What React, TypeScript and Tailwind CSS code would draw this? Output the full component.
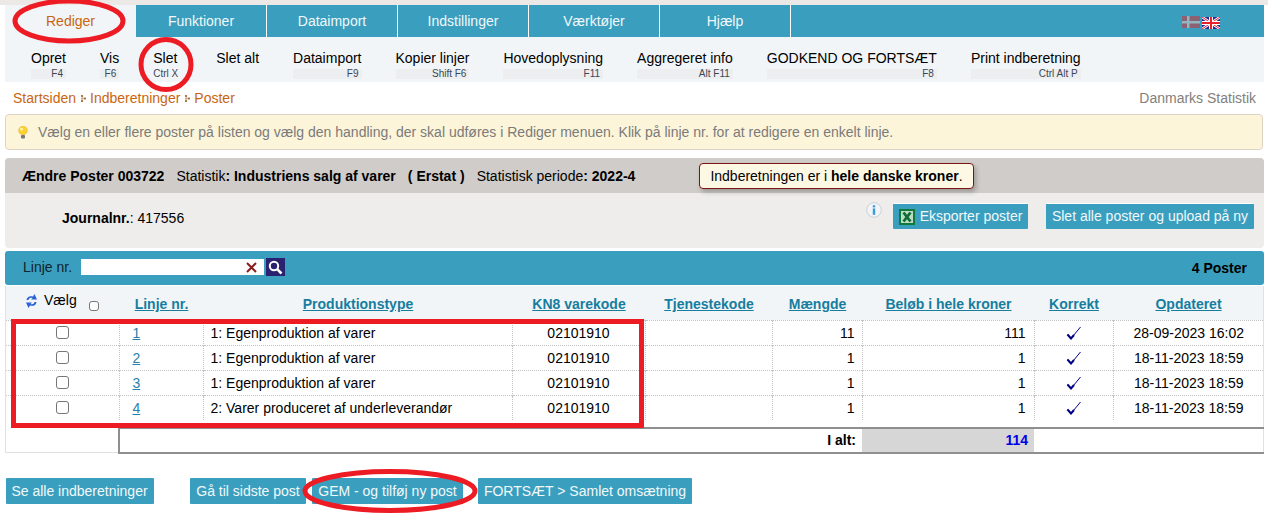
const TABS = ['Funktioner', 'Dataimport', 'Indstillinger', 'Værktøjer', 'Hjælp']

const TOOLS = [
  { label: 'Opret', hint: 'F4' },
  { label: 'Vis', hint: 'F6' },
  { label: 'Slet', hint: 'Ctrl X', plain: true },
  { label: 'Slet alt', hint: '', plain: true, extra: true },
  { label: 'Dataimport', hint: 'F9' },
  { label: 'Kopier linjer', hint: 'Shift F6' },
  { label: 'Hovedoplysning', hint: 'F11' },
  { label: 'Aggregeret info', hint: 'Alt F11' },
  { label: 'GODKEND OG FORTSÆT', hint: 'F8' },
  { label: 'Print indberetning', hint: 'Ctrl Alt P' },
]

const HEADERS = ['Linje nr.', 'Produktionstype', 'KN8 varekode', 'Tjenestekode', 'Mængde', 'Beløb i hele kroner', 'Korrekt', 'Opdateret']

const ROWS = [
  { nr: '1', type: '1: Egenproduktion af varer', amount: '11', value: '111', date: '28-09-2023 16:02' },
  { nr: '2', type: '1: Egenproduktion af varer', amount: '1', value: '1', date: '18-11-2023 18:59' },
  { nr: '3', type: '1: Egenproduktion af varer', amount: '1', value: '1', date: '18-11-2023 18:59' },
  { nr: '4', type: '2: Varer produceret af underleverandør', amount: '1', value: '1', date: '18-11-2023 18:59' },
]

function Check() {
  return (
    <svg width="16" height="14" viewBox="0 0 16 14" className="mx-auto block">
      <path d="M1.5 8.5 L5 12.5 L14.5 1" fill="none" stroke="#000080" strokeWidth="1" />
      <path d="M1.5 8.5 L5 12.5 L8 9" fill="none" stroke="#000080" strokeWidth="2" />
    </svg>
  )
}

function Box({ small }: { small?: boolean }) {
  return <span className={`block rounded-[3px] border border-[#767676] bg-white ${small ? 'w-[10px] h-[10px]' : 'w-[13px] h-[13px]'}`} />
}

function Crumb() {
  return (
    <svg width="5" height="7" viewBox="0 0 5 7" className="ml-[5px] mr-[4px]">
      <rect x="0" y="0" width="2" height="2" fill="#a9794a" />
      <rect x="0" y="5" width="2" height="2" fill="#a9794a" />
      <rect x="2.5" y="2.5" width="2.5" height="2" fill="#a9794a" />
      <rect x="0" y="2.5" width="2" height="2" fill="#c9a47e" />
    </svg>
  )
}

function Button({ children, className = '' }: { children: React.ReactNode; className?: string }) {
  return (
    <div className={`h-[26px] flex items-center justify-center bg-[#3a9fbf] text-[#f1f8fa] text-[14px] rounded-[1px] ${className}`}>
      {children}
    </div>
  )
}

export default function App() {
  return (
    <div className="relative w-[1268px] h-[515px] overflow-hidden bg-white text-[14px] text-black font-['Liberation_Sans',Arial,sans-serif]">
      <div className="h-[5px] bg-[#ece8e5]" />

      {/* Menu tabs */}
      <div className="ml-[5px] mr-[4px] h-[32px] flex bg-[#3a9fbf]">
        <div className="w-[131px] flex items-center justify-center bg-[#f1f5f7] text-[#c8660f]">Rediger</div>
        {TABS.map(t => (
          <div key={t} className="w-[131px] flex items-center justify-center border-r border-white text-[#f1f8fa]">{t}</div>
        ))}
        <div className="ml-auto mr-[44px] pt-[11px] flex items-start gap-[2px]">
          <svg width="18" height="12" viewBox="0 0 18 12">
            <rect width="18" height="12" fill="#8c6172" />
            <rect x="5" width="2.5" height="12" fill="#93b5bf" />
            <rect y="5" width="18" height="2.5" fill="#93b5bf" />
          </svg>
          <svg width="18" height="12" viewBox="0 0 18 12" className="mt-[1px]">
            <rect width="18" height="12" fill="#2a2a90" />
            <path d="M0 0 L18 12 M18 0 L0 12" stroke="#fff" strokeWidth="2.6" />
            <path d="M0 0 L18 12 M18 0 L0 12" stroke="#e8202c" strokeWidth="1" />
            <rect x="7" width="4" height="12" fill="#fff" />
            <rect y="4" width="18" height="4" fill="#fff" />
            <rect x="8" width="2" height="12" fill="#e8202c" />
            <rect y="5" width="18" height="2" fill="#e8202c" />
          </svg>
        </div>
      </div>

      {/* Toolbar */}
      <div className="ml-[5px] mr-[4px] h-[45px] pl-[26px] pt-[13px] flex gap-[34px] bg-[#f1f5f7]">
        {TOOLS.map(t => (
          <div key={t.label} className={t.extra ? 'ml-[4px]' : ''}>
            <div className="leading-[16px] whitespace-nowrap">{t.label}</div>
            <div className={`mt-[3px] h-[10px] flex items-center justify-end text-[10px] leading-[10px] whitespace-nowrap text-[#3c4654] ${t.plain ? '' : 'pr-[3px] bg-[#eceef0]'}`}>
              {t.hint}
            </div>
          </div>
        ))}
      </div>

      {/* Breadcrumb */}
      <div className="mt-[8px] pl-[13px] pr-[12px] h-[16px] flex items-center leading-[16px] text-[#c8660f]">
        <span>Startsiden</span>
        <Crumb />
        <span>Indberetninger</span>
        <Crumb />
        <span>Poster</span>
        <span className="ml-auto text-[#83807c]">Danmarks Statistik</span>
      </div>

      {/* Notice */}
      <div className="mt-[8px] ml-[5px] mr-[5px] h-[36px] pl-[12px] flex items-center gap-[10px] rounded-[4px] border border-[#dfd3c3] bg-[#fdf5d9] text-[#7b7b7b]">
        <svg width="10" height="13" viewBox="0 0 10 13">
          <circle cx="5" cy="4.5" r="4.3" fill="#fbd22e" stroke="#e2b93a" strokeWidth="0.7" />
          <circle cx="3.6" cy="3.2" r="1.4" fill="#fff3b0" />
          <rect x="3" y="9" width="4" height="3.6" rx="1" fill="#77787a" />
        </svg>
        <span>Vælg en eller flere poster på listen og vælg den handling, der skal udføres i Rediger menuen. Klik på linje nr. for at redigere en enkelt linje.</span>
      </div>

      {/* Heading panel */}
      <div className="mt-[8px] ml-[5px] mr-[4px] h-[90px] rounded-[4px] overflow-hidden bg-[#eeedeb]">
        <div className="h-[35px] pl-[17px] pt-[1px] flex items-center bg-[#d0ccc9] whitespace-pre">
          <b>Ændre Poster 003722</b>
          <span className="ml-[12px]">Statistik</span><b>: Industriens salg af varer</b>
          <b className="ml-[12px]">( Erstat )</b>
          <span className="ml-[12px]">Statistisk periode</span><b>: 2022-4</b>
          <div className="ml-[64px] h-[26px] px-[10px] flex items-center rounded-[4px] border border-[#7a1512] bg-[#fdf8e3] shadow-[2px_3px_5px_rgba(0,0,0,0.25)]">
            <span>Indberetningen er i </span><b>hele danske kroner</b><span>.</span>
          </div>
        </div>
        <div className="h-[55px] pl-[57px] flex items-start">
          <div className="pt-[17px] leading-[16px]"><b>Journalnr.</b>: 417556</div>
          <div className="ml-auto mr-[10px] pt-[10px] flex items-start">
            <svg width="16" height="16" viewBox="0 0 16 16" className="mr-[11px] mt-[-1px]">
              <circle cx="8" cy="8" r="7.3" fill="#f2f4f5" stroke="#c6d2d8" strokeWidth="1" />
              <rect x="6.8" y="3.2" width="2.4" height="2.2" fill="#3d9cdc" />
              <rect x="6.8" y="6.4" width="2.4" height="6.4" fill="#3d9cdc" />
            </svg>
            <Button className="w-[135px] gap-[5px] border-t border-[#fff]">
              <svg width="16" height="16" viewBox="0 0 16 16">
                <rect width="16" height="16" fill="#0f7a3c" />
                <rect x="2" y="2" width="12" height="12" fill="#b9dcc2" />
                <path d="M4.5 3.5 L11.5 12.5 M11.5 3.5 L4.5 12.5" stroke="#0f6a34" strokeWidth="2.8" />
              </svg>
              <span>Eksporter poster</span>
            </Button>
            <Button className="ml-[18px] w-[208px] border-t border-[#fff]">Slet alle poster og upload på ny</Button>
          </div>
        </div>
      </div>

      {/* Search bar */}
      <div className="mt-[3px] ml-[5px] mr-[4px] h-[34px] pl-[18px] pr-[17px] flex items-center rounded-[3px] bg-[#3a9fbf]">
        <div className="pb-[2px] flex items-center">
          <span className="text-[#10222a]">Linje nr.</span>
          <div className="ml-[9px] w-[183px] h-[16px] pr-[7px] flex items-center justify-end bg-white">
            <svg width="11" height="11" viewBox="0 0 11 11">
              <path d="M1 1 L10 10 M10 1 L1 10" stroke="#8c1c1c" strokeWidth="2" />
            </svg>
          </div>
          <div className="ml-[2px] w-[19px] h-[18px] flex items-center justify-center bg-[#2a2270]">
            <svg width="15" height="15" viewBox="0 0 15 15">
              <circle cx="6" cy="6" r="4.2" fill="none" stroke="#fff" strokeWidth="2" />
              <path d="M9.2 9.2 L13.5 13.5" stroke="#fff" strokeWidth="2.6" />
            </svg>
          </div>
        </div>
        <b className="ml-auto">4 Poster</b>
      </div>

      {/* Table */}
      <div className="mt-[1px] ml-[5px] mr-[4px] h-[167px] border-x border-b border-[#dfe1e2]">
        <table className="w-full table-fixed border-collapse">
          <colgroup>
            <col className="w-[113px]" />
            <col className="w-[84px]" />
            <col className="w-[309px]" />
            <col className="w-[133px]" />
            <col className="w-[127px]" />
            <col className="w-[90px]" />
            <col className="w-[172px]" />
            <col className="w-[79px]" />
            <col />
          </colgroup>
          <thead>
            <tr className="h-[34px] bg-[#f1f5f7]">
              <th className="p-0 font-normal">
                <div className="pl-[19px] pb-[3px] flex items-start gap-[6px]">
                  <svg width="13" height="16" viewBox="0 0 13 16" className="mt-[1px]">
                    <path d="M1.5 7 C2 3.5 5 2.5 8 3.5 L9.5 1 L12 6.5 L6 6.5 L7.5 5 C5.5 4.5 4 5 3.5 7 Z" fill="#2b63d4" />
                    <path d="M11.5 9 C11 12.5 8 13.5 5 12.5 L3.5 15 L1 9.5 L7 9.5 L5.5 11 C7.5 11.5 9 11 9.5 9 Z" fill="#2b63d4" />
                  </svg>
                  <span className="leading-[16px]">Vælg</span>
                  <span className="ml-[6px] mt-[9px]"><Box small /></span>
                </div>
              </th>
              {HEADERS.map(h => (
                <th key={h} className="p-0 pt-[4px] pl-[1px] font-bold text-center">
                  <span className="underline text-[#167d9f]">{h}</span>
                </th>
              ))}
            </tr>
          </thead>
          <tbody>
            {ROWS.map(r => (
              <tr key={r.nr} className="h-[25px] border-t border-dotted border-[#c4c4c4]">
                <td className="p-0"><div className="flex justify-center pl-[1px]"><Box /></div></td>
                <td className="p-0 pt-[1px] pl-[13px] border-l border-dotted border-[#c4c4c4]"><span className="underline text-[#2a7fa8]">{r.nr}</span></td>
                <td className="p-0 pt-[1px] pl-[7px] border-l border-dotted border-[#c4c4c4] whitespace-nowrap">{r.type}</td>
                <td className="p-0 pt-[1px] text-center border-l border-dotted border-[#c4c4c4]">02101910</td>
                <td className="p-0 border-l border-dotted border-[#c4c4c4]" />
                <td className="p-0 pt-[1px] pr-[7px] text-right border-l border-dotted border-[#c4c4c4]">{r.amount}</td>
                <td className="p-0 pt-[1px] pr-[8px] text-right border-l border-dotted border-[#c4c4c4]">{r.value}</td>
                <td className="p-0 border-l border-dotted border-[#c4c4c4]"><Check /></td>
                <td className="p-0 pt-[1px] pl-[1px] text-center border-l border-dotted border-[#c4c4c4]">{r.date}</td>
              </tr>
            ))}
          </tbody>
        </table>

        {/* Totals */}
        <div className="mt-[7px] ml-[112px] mr-[-1px] h-[27px] flex border-l-2 border-y-2 border-[#8f8f8f] font-bold">
          <div className="flex-1 pr-[6px] flex items-center justify-end">I alt:</div>
          <div className="w-[172px] pr-[6px] flex items-center justify-end bg-[#d6d6d6] text-[#0000e6]">114</div>
          <div className="w-[230px]" />
        </div>
      </div>

      {/* Bottom buttons */}
      <div className="mt-[25px] ml-[6px] flex">
        <Button className="w-[148px] pr-[1px]">Se alle indberetninger</Button>
        <Button className="ml-[36px] w-[116px]">Gå til sidste post</Button>
        <Button className="ml-[6px] w-[151px]">GEM - og tilføj ny post</Button>
        <Button className="ml-[15px] w-[214px]">FORTSÆT &gt; Samlet omsætning</Button>
      </div>

      {/* Red annotations drawn on top of the screenshot */}
      <div className="absolute left-[11px] top-[319px] w-[633px] h-[109px] border-[5px] border-[#ed1c24]" />
      <svg width="1268" height="515" className="absolute left-0 top-0 pointer-events-none">
        <ellipse cx="69" cy="21" rx="54" ry="20" fill="none" stroke="#ed1c24" strokeWidth="5" />
        <ellipse cx="166" cy="64.5" rx="25" ry="25" fill="none" stroke="#ed1c24" strokeWidth="5" />
        <ellipse cx="390" cy="491" rx="85" ry="19.5" fill="none" stroke="#ed1c24" strokeWidth="5" />
      </svg>
    </div>
  )
}
